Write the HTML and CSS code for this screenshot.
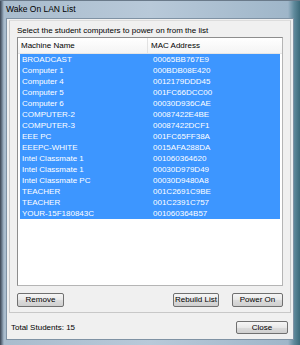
FILE: index.html
```html
<!DOCTYPE html>
<html>
<head>
<meta charset="utf-8">
<link rel="stylesheet" href="styles.css">
</head>
<body>
<div class="window">
  <div class="titlebar">Wake On LAN List</div>
  <div class="client">
    <div class="panel">
      <div class="prompt">Select the student computers to power on from the list</div>
      <div class="listview">
        <div class="header">
          <div class="col c1">Machine Name</div>
          <div class="col c2">MAC Address</div>
        </div>
        <div class="rows">
          <div class="row"><span class="c1">BROADCAST</span><span class="c2">00065BB767E9</span></div>
          <div class="row"><span class="c1">Computer 1</span><span class="c2">000BDB08E420</span></div>
          <div class="row"><span class="c1">Computer 4</span><span class="c2">0012179DDD45</span></div>
          <div class="row"><span class="c1">Computer 5</span><span class="c2">001FC66DCC00</span></div>
          <div class="row"><span class="c1">Computer 6</span><span class="c2">00030D936CAE</span></div>
          <div class="row"><span class="c1">COMPUTER-2</span><span class="c2">00087422E4BE</span></div>
          <div class="row"><span class="c1">COMPUTER-3</span><span class="c2">00087422DCF1</span></div>
          <div class="row"><span class="c1">EEE PC</span><span class="c2">001FC65FF38A</span></div>
          <div class="row"><span class="c1">EEEPC-WHITE</span><span class="c2">0015AFA288DA</span></div>
          <div class="row"><span class="c1">Intel Classmate 1</span><span class="c2">001060364620</span></div>
          <div class="row"><span class="c1">Intel Classmate 1</span><span class="c2">00030D979D49</span></div>
          <div class="row"><span class="c1">Intel Classmate PC</span><span class="c2">00030D9480A8</span></div>
          <div class="row"><span class="c1">TEACHER</span><span class="c2">001C2691C9BE</span></div>
          <div class="row"><span class="c1">TEACHER</span><span class="c2">001C2391C757</span></div>
          <div class="row"><span class="c1">YOUR-15F180843C</span><span class="c2">001060364B57</span></div>
        </div>
      </div>
      <div class="actions">
        <button class="btn w-remove">Remove</button>
        <div class="spacer"></div>
        <button class="btn w-rebuild">Rebuild List</button>
        <button class="btn w-power">Power On</button>
      </div>
    </div>
    <div class="footer">
      <div class="total">Total Students: 15</div>
      <button class="btn w-close">Close</button>
    </div>
  </div>
</div>
</body>
</html>
```
FILE: styles.css
```css
* { box-sizing: border-box; }
html, body { margin: 0; padding: 0; }
body {
  width: 300px;
  height: 345px;
  overflow: hidden;
  font-family: "Liberation Sans", Arial, sans-serif;
  font-size: 8px;
  color: #000;
  background: #4a5868;
}
.window {
  width: 300px;
  height: 345px;
  display: flex;
  flex-direction: column;
  padding: 0 6px 5px 6px;
  background: linear-gradient(90deg, #3a4350 0px, #6d7e90 2px, #a9bccd 4px, #b8c9d9 50%, #9fb6c9 96%, #5f8a9c 98%, #3c6a7a 100%);
  border-top: 1px solid #6a7a8a;
}
.titlebar {
  height: 17px;
  line-height: 17px;
  font-size: 8.5px;
  padding-left: 0;
  color: #000;
  flex: none;
}
.client {
  flex: 1;
  background: #f0f0f0;
  border: 1px solid #7f92a4;
  display: flex;
  flex-direction: column;
  padding: 1px 2px 0 2px;
}
.panel {
  height: 293px;
  border: 1px solid #c8c8c8;
  border-top-color: #dcdcdc;
  display: flex;
  flex-direction: column;
  padding: 0 7px 0 7px;
}
.prompt {
  height: 16px;
  line-height: 15px;
  padding-top: 2px;
  padding-left: 0;
}
.listview {
  height: 249px;
  background: #fff;
  border: 1px solid #8d8d8d;
  border-right-color: #b5b5b5;
  border-bottom-color: #b5b5b5;
  display: flex;
  flex-direction: column;
}
.header {
  height: 16px;
  display: flex;
  border-bottom: 1px solid #e5e5e5;
  background: linear-gradient(#ffffff, #f4f4f4);
}
.header .col {
  line-height: 15px;
  padding-left: 3px;
}
.header .c1 {
  width: 130px;
  border-right: 1px solid #e2e2e2;
}
.rows {
  padding-left: 2px;
  padding-right: 2px;
}
.row {
  height: 11px;
  line-height: 11px;
  display: flex;
  background: #3d96ff;
  color: #fff;
}
.row .c1 {
  width: 131px;
  padding-left: 2px;
}
.row .c2 {
  padding-left: 2px;
}
.actions {
  display: flex;
  margin-top: 7px;
  gap: 13px;
}
.spacer { flex: 1; }
.btn {
  font-family: "Liberation Sans", Arial, sans-serif;
  font-size: 8px;
  height: 14px;
  padding: 0;
  border: 1px solid #707070;
  border-radius: 2px;
  background: linear-gradient(#f6f6f6 0%, #e8e8e8 50%, #dcdcdc 51%, #cfcfcf 100%);
  color: #000;
  line-height: 12px;
}
.w-remove { width: 47px; }
.w-rebuild { width: 46px; }
.w-power { width: 51px; }
.footer {
  display: flex;
  align-items: center;
  padding: 8px 3px 0 2px;
}
.total { flex: 1; }
.w-close { width: 52px; height: 13px; }
```
